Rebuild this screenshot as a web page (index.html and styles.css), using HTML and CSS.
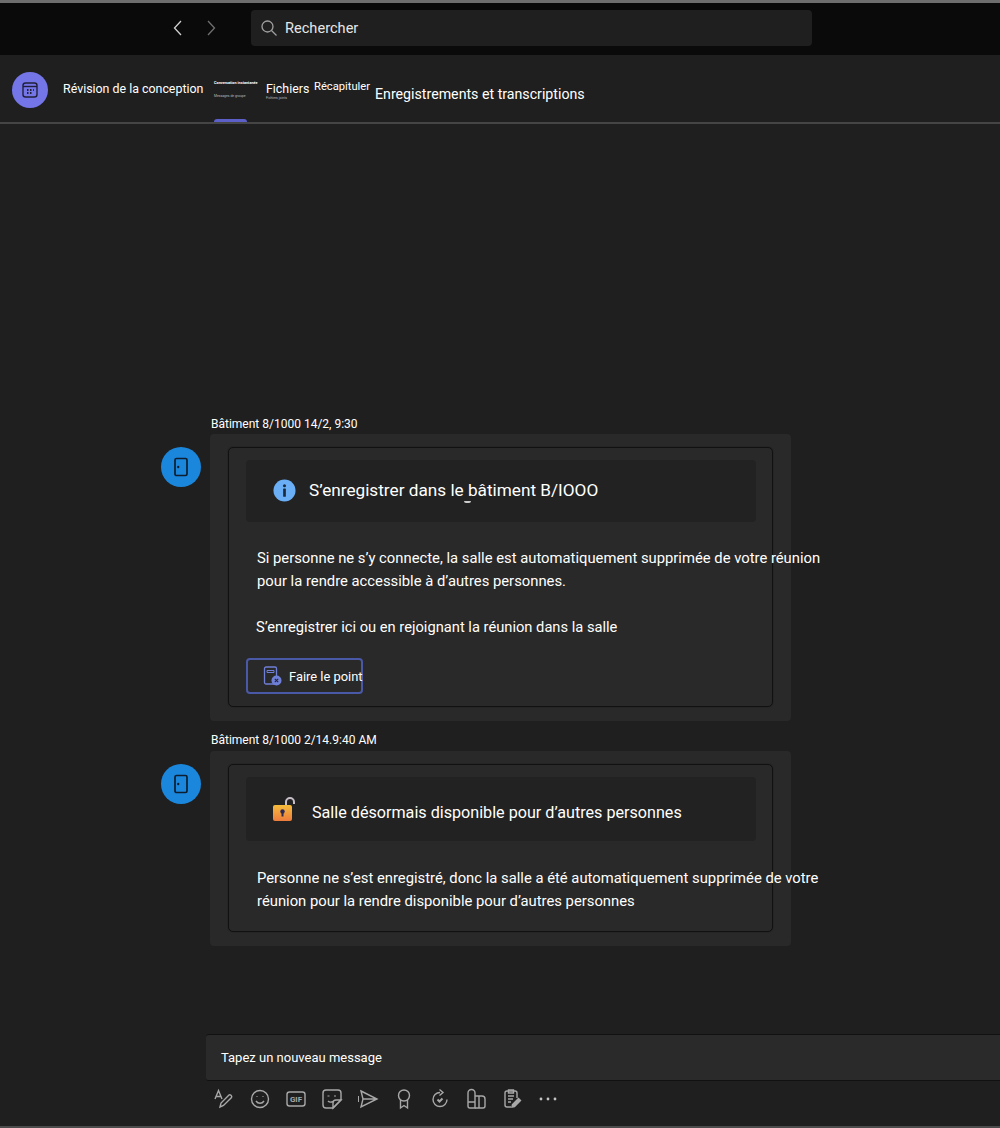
FILE: index.html
```html
<!DOCTYPE html>
<html lang="fr">
<head>
    <title>Révision de la conception</title>
    <meta charset="UTF-8">
    <link rel="stylesheet" href="styles.css">
</head>
<body>
    <header class="titlebar">
        <div class="nav-arrows">
            <svg class="arrow" width="12" height="18" viewBox="0 0 12 18"><path d="M9 2 2.500 9 9 16"/></svg>
            <svg class="arrow arrow-dim" width="12" height="18" viewBox="0 0 12 18"><path d="M3 2 9.500 9 3 16"/></svg>
        </div>
        <div class="search">
            <svg width="18" height="18" viewBox="0 0 18 18" fill="none" stroke="#a0a0a0" stroke-width="1.3"><circle cx="7.500" cy="7.500" r="5.500"/><path d="m11.500 11.500 5 5"/></svg>
            <span>Rechercher</span>
        </div>
    </header>

    <nav class="tabs">
        <div class="meeting-icon">
            <svg width="18" height="18" viewBox="0 0 18 18" fill="none" stroke="#20203a" stroke-width="1.4"><rect x="2" y="2" width="14" height="14" rx="2.500"/><path d="M2 5.500h14"/><path d="M6 9h1.500M9 9h1.500M12 9h.8M6 12h1.500M9 12h1.500" stroke-width="1.800"/></svg>
        </div>
        <span class="meeting-title">Révision de la conception</span>
        <div class="tab tab-active">
            <span class="tab-tiny">Conversation instantanée</span>
            <span class="tab-ghost">Messages de groupe</span>
            <span class="tab-marker"></span>
        </div>
        <div class="tab tab-files">
            <span>Fichiers</span>
            <span class="tab-ghost">Fichiers joints</span>
        </div>
        <span class="tab tab-recap">Récapituler</span>
        <span class="tab tab-records">Enregistrements et transcriptions</span>
    </nav>

    <main class="thread">
        <div class="message">
            <div class="sender">Bâtiment 8/1000 14/2, 9:30</div>
            <div class="message-row">
                <div class="avatar">
                    <svg width="16" height="20" viewBox="0 0 16 20" fill="none" stroke="#0c1e30" stroke-width="1.700"><rect x="2" y="1.500" width="12" height="17" rx="1.500"/><circle cx="5.200" cy="10" r="1.200" fill="#0c1e30" stroke="none"/></svg>
                </div>
                <div class="card">
                    <div class="card-inner">
                        <div class="card-header card-header-info">
                            <svg width="23" height="23" viewBox="0 0 24 24"><circle cx="12" cy="12" r="11.500" fill="#6aaef5"/><circle cx="12" cy="7" r="1.600" fill="#1c2a3a"/><rect x="10.600" y="10" width="2.800" height="8.500" rx=".6" fill="#1c2a3a"/></svg>
                            <span>S’enregistrer dans le bâtiment B/IOOO</span>
                            <i class="header-mark"></i>
                        </div>
                        <p class="card-text card-text-first">Si personne ne s’y connecte, la salle est automatiquement supprimée de votre réunion<br>pour la rendre accessible à d’autres personnes.</p>
                        <p class="card-text card-text-hint">S’enregistrer ici ou en rejoignant la réunion dans la salle</p>
                        <button class="check-btn">
                            <svg width="20" height="20" viewBox="0 0 20 20" fill="none"><rect x="2.500" y="1" width="12" height="17" rx="1.500" stroke="#6f7fd6" stroke-width="1.300"/><path d="M5 4.500h7v2H5z" stroke="#6f7fd6"/><circle cx="14.500" cy="14.500" r="5" fill="#6f7fd6"/><path d="m12.800 12.800 3.400 3.400m0-3.400-3.400 3.400" stroke="#20243c" stroke-width="1.100"/></svg>
                            <span>Faire le point</span>
                        </button>
                    </div>
                </div>
            </div>
        </div>

        <div class="message">
            <div class="sender sender-second">Bâtiment 8/1000 2/14.9:40 AM</div>
            <div class="message-row">
                <div class="avatar">
                    <svg width="16" height="20" viewBox="0 0 16 20" fill="none" stroke="#0c1e30" stroke-width="1.700"><rect x="2" y="1.500" width="12" height="17" rx="1.500"/><circle cx="5.200" cy="10" r="1.200" fill="#0c1e30" stroke="none"/></svg>
                </div>
                <div class="card">
                    <div class="card-inner">
                        <div class="card-header card-header-lock">
                            <svg width="24" height="26" viewBox="0 0 24 26">
                                <defs><linearGradient id="lockFill" x1="0" y1="0" x2="0" y2="1"><stop offset="0" stop-color="#f5bb3a"/><stop offset="1" stop-color="#ee7c3e"/></linearGradient></defs>
                                <path d="M14 10V6a4 4 0 0 1 8 0v2" fill="none" stroke="#c9bfc9" stroke-width="2"/>
                                <rect x="1" y="9" width="19" height="16" rx="2" fill="url(#lockFill)"/>
                                <circle cx="10.500" cy="15.500" r="2.200" fill="#2d2a55"/><rect x="9.500" y="15.500" width="2" height="5" fill="#2d2a55"/>
                            </svg>
                            <span>Salle désormais disponible pour d’autres personnes</span>
                        </div>
                        <p class="card-text card-text-second">Personne ne s’est enregistré, donc la salle a été automatiquement supprimée de votre<br>réunion pour la rendre disponible pour d’autres personnes</p>
                    </div>
                </div>
            </div>
        </div>
    </main>

    <section class="composer">
        <div class="composer-input">Tapez un nouveau message</div>
        <div class="toolbar">
            <svg viewBox="0 0 22 22"><path d="M2 11 5.500 2.500 9 11M3.200 8.500h4.600"/><path d="m7 19 1-4 8-8c1-1 3.500 1 2.500 2.500l-8 8z"/></svg>
            <svg viewBox="0 0 22 22"><circle cx="11" cy="11" r="8.500"/><path d="M7 13c2 3 6 3 8 0"/><path d="M8 8.500v.5M14 8.500v.5" stroke-width="2"/></svg>
            <svg viewBox="0 0 22 22"><rect x="2" y="4" width="18" height="14" rx="2.500"/><text x="11" y="14" class="gif-label">GIF</text></svg>
            <svg viewBox="0 0 22 22"><path d="M12 20H5a3 3 0 0 1-3-3V5a3 3 0 0 1 3-3h12a3 3 0 0 1 3 3v7z"/><path d="M20 12h-5a3 3 0 0 0-3 3v5z"/><path d="M7 13c1.500 1.500 3 1.500 5 .5"/><path d="M7.500 7.500v1M14 7.500v1" stroke-width="2"/></svg>
            <svg viewBox="0 0 22 22"><path d="M4 3 20 11 4 19l2-8zM6 11h14"/><path d="M1.500 8v6" stroke-width="1"/></svg>
            <svg viewBox="0 0 22 22"><circle cx="11" cy="7.500" r="5.500"/><path d="M7.500 12v8l3.500-2.500 3.500 2.500v-8"/></svg>
            <svg viewBox="0 0 22 22"><path d="M11 4.500a7 7 0 1 0 7 7"/><path d="M10.500 1.500 14 4.500l-3.500 3"/><path d="m8.500 11.500 2 2 3-3" stroke-width="2"/></svg>
            <svg viewBox="0 0 22 22"><path d="M3 11V5a3.500 3.500 0 0 1 7 0v15H5a2 2 0 0 1-2-2zM3 14h7"/><path d="M10 8h7a3 3 0 0 1 3 3v7a2 2 0 0 1-2 2h-8M14 8v12"/></svg>
            <svg viewBox="0 0 22 22"><path d="M10 19H6a2 2 0 0 1-2-2V5a2 2 0 0 1 2-2h8a2 2 0 0 1 2 2v5"/><path d="M7.500 2h5v3h-5zM7 8h6M7 11h5M7 14h3"/><path d="m11 19 .5-2.500 6-6 2 2-6 6z" fill="#a8a8a8"/></svg>
            <svg viewBox="0 0 22 22"><circle cx="4" cy="11" r="1.400" class="dot"/><circle cx="11" cy="11" r="1.400" class="dot"/><circle cx="18" cy="11" r="1.400" class="dot"/></svg>
        </div>
    </section>
</body>
</html>
```

FILE: styles.css
```css
* {
    box-sizing: border-box;
}
body {
    margin: 0;
    height: 1128px;
    overflow: hidden;
    background: #1f1f1f;
    color: #fff;
    font-family: Roboto, "Liberation Sans", sans-serif;
    display: flex;
    flex-direction: column;
    border-top: 3px solid #6e6e6e;
    border-bottom: 2px solid #4c4c4c;
}

/* title bar */
.titlebar {
    height: 52px;
    background: #0a0a0a;
    display: flex;
    align-items: flex-start;
    padding: 7px 0 0 172px;
}
.nav-arrows {
    display: flex;
    gap: 21px;
    width: 79px;
    padding-top: 9px;
}
.arrow {
    fill: none;
    stroke: #d0d0d0;
    stroke-width: 1.3;
}
.arrow-dim {
    stroke: #707070;
}
.search {
    width: 561px;
    height: 36px;
    background: #1f1f1f;
    border-radius: 4px;
    display: flex;
    align-items: center;
    gap: 7px;
    padding-left: 9px;
    font-size: 14.6px;
    color: #e6e6e6;
}

/* tabs */
.tabs {
    height: 69px;
    flex: none;
    display: flex;
    align-items: flex-start;
    padding-left: 12px;
    border-bottom: 2px solid #454545;
    font-size: 12.4px;
}
.meeting-icon {
    width: 36px;
    height: 36px;
    margin-top: 17px;
    border-radius: 50%;
    background: #7476e8;
    display: flex;
    align-items: center;
    justify-content: center;
}
.meeting-title {
    margin: 26px 0 0 15px;
    width: 151px;
    white-space: nowrap;
}
.tab {
    white-space: nowrap;
}
.tab-active {
    width: 52px;
    height: 67px;
    display: flex;
    flex-direction: column;
    padding-top: 25px;
}
.tab-tiny {
    font-size: 3.8px;
    font-weight: 700;
    line-height: 5px;
}
.tab-ghost {
    font-size: 3.4px;
    line-height: 5px;
    color: #bbb;
    margin-top: 9px;
}
.tab-marker {
    width: 33px;
    height: 3px;
    margin-top: auto;
    background: #5b5fc7;
    border-radius: 3px 3px 0 0;
}
.tab-files {
    width: 48px;
    display: flex;
    flex-direction: column;
    padding-top: 26px;
}
.tab-files .tab-ghost {
    margin-top: 0;
}
.tab-recap {
    width: 61px;
    padding-top: 25px;
    font-size: 11.2px;
}
.tab-records {
    padding-top: 31px;
    font-size: 14.2px;
}

/* messages */
.thread {
    flex: 1;
    padding: 293px 0 0 161px;
    display: flex;
    flex-direction: column;
    gap: 13px;
}
.sender {
    height: 17px;
    margin-left: 50px;
    font-size: 12px;
    line-height: 14px;
}
.sender-second {
    line-height: 12px;
}
.message-row {
    display: flex;
    align-items: flex-start;
    gap: 9px;
}
.avatar {
    width: 40px;
    height: 40px;
    margin-top: 13px;
    flex: none;
    border-radius: 50%;
    background: #1b87dc;
    display: flex;
    align-items: center;
    justify-content: center;
}
.card {
    width: 581px;
    padding: 13px 18px 14px;
    background: #292929;
    border-radius: 4px;
}
.card-inner {
    border: 1px solid #111;
    border-radius: 5px;
    box-shadow: 0 0 1px #111;
    padding: 12px 16px 12px 17px;
}
.card-header {
    position: relative;
    background: #222;
    border-radius: 4px;
    display: flex;
    align-items: center;
    white-space: nowrap;
}
.card-header-info {
    height: 62px;
    padding: 0 0 2px 27px;
    gap: 13px;
    font-size: 17.2px;
}
.card-header-lock {
    height: 64px;
    padding-left: 26px;
    gap: 16px;
    font-size: 16.15px;
}
.card-header-lock span {
    margin-top: 7px;
}
.header-mark {
    position: absolute;
    left: 218px;
    top: 41px;
    width: 7px;
    height: 2px;
    background: #ccc;
    border-radius: 0 0 4px 4px;
}
.card-text {
    margin: 0;
    font-size: 14.8px;
    line-height: 23px;
    white-space: nowrap;
    margin-left: 11px;
}
.card-text-first {
    margin-top: 25px;
}
.card-text-hint {
    margin: 23px 0 0 10px;
    font-size: 14.7px;
}
.card-text-second {
    margin-top: 26px;
    padding-bottom: 6px;
}
.check-btn {
    width: 117px;
    height: 36px;
    margin-top: 19px;
    display: flex;
    align-items: center;
    gap: 7px;
    padding: 0 0 0 14px;
    background: none;
    border: 2px solid #4a58a8;
    border-radius: 4px;
    color: #fff;
    font: 12.9px Roboto, "Liberation Sans", sans-serif;
    white-space: nowrap;
}
.check-btn svg {
    flex: none;
}

/* composer */
.composer {
    height: 92px;
    padding-left: 206px;
    flex: none;
}
.composer-input {
    height: 47px;
    background: #2a2a2a;
    border-top: 1px solid #111;
    border-bottom: 1px solid #111;
    border-radius: 3px 0 0 3px;
    padding-left: 15px;
    font-size: 13px;
    line-height: 45px;
}
.toolbar {
    display: flex;
    padding-top: 7px;
}
.toolbar svg {
    width: 22px;
    height: 22px;
    margin: 0 7px;
    fill: none;
    stroke: #a8a8a8;
    stroke-width: 1.4;
}
.toolbar .dot {
    fill: #c4c4c4;
    stroke: none;
}
.gif-label {
    font: 700 8px Roboto, sans-serif;
    fill: #a8a8a8;
    stroke: none;
    text-anchor: middle;
}
```
